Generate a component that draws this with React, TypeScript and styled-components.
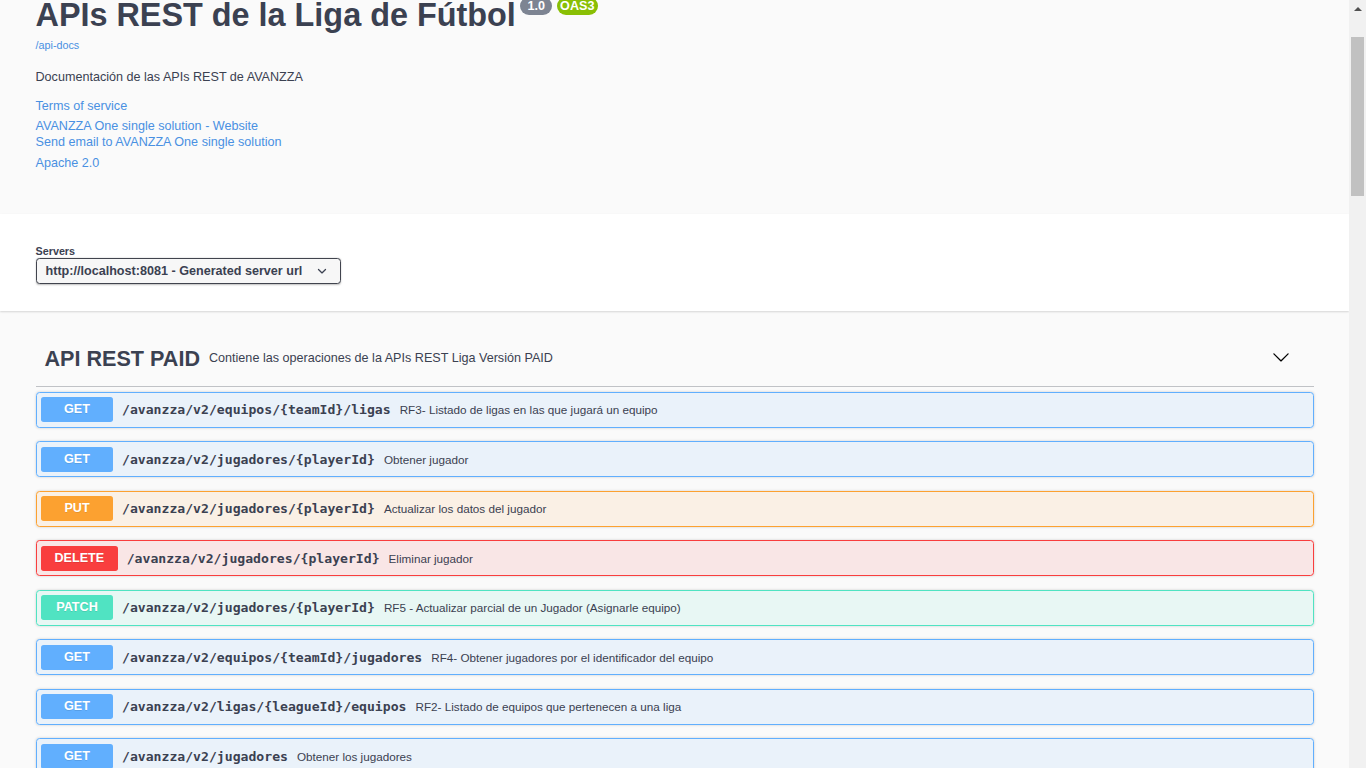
import React from 'react';
import styled, { createGlobalStyle } from 'styled-components';

const GlobalStyle = createGlobalStyle`
  html, body { margin: 0; padding: 0; height: 100%; overflow: hidden; background: #fafafa; }
  #root { height: 100%; }
  *, *::before, *::after { box-sizing: border-box; }
`;

const Page = styled.div`
  display: flex;
  height: 100vh;
  width: 100vw;
  overflow: hidden;
  background: #fafafa;
  color: #3b4151;
  font-family: "Liberation Sans", Arial, sans-serif;
`;

const Viewport = styled.div`
  flex: 1;
  min-width: 0;
  overflow: hidden;
`;

const Zoomed = styled.div`
  zoom: 0.9;
`;

const Wrapper = styled.div`
  width: 100%;
  max-width: 1460px;
  margin: 0 auto;
  padding: 0 20px;
`;

const Info = styled.div`
  padding-bottom: 48px;
`;

const Title = styled.h2`
  display: flex;
  align-items: flex-start;
  margin: -3px 0 0;
  font-size: 36px;
  line-height: 41px;
  font-weight: 700;
  color: #3b4151;
`;

const Badge = styled.small<{ $stamp?: boolean }>`
  margin-left: 5px;
  padding: 2px 4px;
  border-radius: 57px;
  background: ${(p) => (p.$stamp ? '#89bf04' : '#7d8492')};
  color: #fff;
  font-size: 14px;
  line-height: 16px;
  font-weight: 700;
  white-space: pre;
`;

const BaseUrl = styled.a`
  display: block;
  margin-top: 5px;
  font-size: 12px;
  line-height: 14px;
  color: #4990e2;
  text-decoration: none;
`;

const Description = styled.p`
  margin: 20px 0 0;
  font-size: 14px;
  line-height: 18px;
  color: #3b4151;
`;

const InfoItem = styled.div<{ $top: number }>`
  margin-top: ${(p) => p.$top}px;
`;

const InfoLink = styled.a`
  display: block;
  font-size: 14px;
  line-height: 18px;
  color: #4990e2;
  text-decoration: none;
`;

const SchemeContainer = styled.section`
  background: #fff;
  box-shadow: 0 1px 2px 0 rgba(0, 0, 0, 0.15);
  padding: 30px 0;
  margin-bottom: 20px;
`;

const ServersTitle = styled.span`
  display: block;
  padding-top: 4px;
  margin-bottom: 1px;
  font-size: 12px;
  line-height: 14px;
  font-weight: 700;
  color: #3b4151;
`;

const SelectBox = styled.div`
  display: inline-flex;
  align-items: center;
  gap: 12px;
  height: 29px;
  padding: 0 10px;
  border: 2px solid #41444e;
  border-radius: 4px;
  background: #f7f7f7;
  box-shadow: 0 1px 2px 0 rgba(0, 0, 0, 0.25);
  font-size: 14px;
  font-weight: 700;
  color: #3b4151;
`;

const Tag = styled.h3`
  display: flex;
  align-items: center;
  margin: 0 0 5px;
  padding: 18px 20px 17px 10px;
  border-bottom: 1px solid rgba(59, 65, 81, 0.3);
  font-size: 24px;
  line-height: 28px;
  font-weight: 700;
  color: #3b4151;
`;

const TagDesc = styled.small`
  flex: 2;
  padding: 0 10px;
  font-size: 14px;
  line-height: 16px;
  font-weight: 400;
`;

const ExpandButton = styled.button`
  display: flex;
  margin-top: -3px;
  padding: 1px 6px;
  border: none;
  background: none;
`;

const methodColors: Record<string, string> = {
  GET: '97,175,254',
  PUT: '252,161,48',
  DELETE: '249,62,62',
  PATCH: '80,227,194',
  POST: '73,204,144',
};

const Opblock = styled.div<{ $rgb: string }>`
  margin: 0 0 14.8px;
  border: 1px solid rgb(${(p) => p.$rgb});
  border-radius: 4px;
  background: rgba(${(p) => p.$rgb}, 0.1);
  box-shadow: 0 0 3px rgba(0, 0, 0, 0.19);
`;

const Summary = styled.div`
  display: flex;
  align-items: center;
  padding: 5px;
`;

const Method = styled.span<{ $rgb: string }>`
  min-width: 80px;
  padding: 6px 15px;
  border-radius: 3px;
  background: rgb(${(p) => p.$rgb});
  color: #fff;
  font-size: 14px;
  line-height: 16px;
  font-weight: 700;
  text-align: center;
  text-shadow: 0 1px 0 rgba(0, 0, 0, 0.1);
`;

const Path = styled.span`
  padding: 0 10px;
  font-family: "DejaVu Sans Mono", "Liberation Mono", monospace;
  font-size: 14.6px;
  font-weight: 700;
  color: #3b4151;
`;

const OpDesc = styled.span`
  flex: 1 1 auto;
  font-size: 13px;
  color: #3b4151;
`;

const ScrollBar = styled.aside`
  flex: none;
  width: 17px;
  display: flex;
  flex-direction: column;
  align-items: center;
  background: #f1f1f1;
`;

const ScrollArrow = styled.div`
  display: flex;
  align-items: center;
  justify-content: center;
  width: 17px;
  height: 17px;
  &::before {
    content: '';
    border-left: 4px solid transparent;
    border-right: 4px solid transparent;
    border-bottom: 4px solid #505050;
  }
`;

const Thumb = styled.div`
  width: 13px;
  height: 159px;
  margin-top: 20px;
  background: #c1c1c1;
`;

const ops = [
  { method: 'GET', path: '/avanzza/v2/equipos/{teamId}/ligas', desc: 'RF3- Listado de ligas en las que jugará un equipo' },
  { method: 'GET', path: '/avanzza/v2/jugadores/{playerId}', desc: 'Obtener jugador' },
  { method: 'PUT', path: '/avanzza/v2/jugadores/{playerId}', desc: 'Actualizar los datos del jugador' },
  { method: 'DELETE', path: '/avanzza/v2/jugadores/{playerId}', desc: 'Eliminar jugador' },
  { method: 'PATCH', path: '/avanzza/v2/jugadores/{playerId}', desc: 'RF5 - Actualizar parcial de un Jugador (Asignarle equipo)' },
  { method: 'GET', path: '/avanzza/v2/equipos/{teamId}/jugadores', desc: 'RF4- Obtener jugadores por el identificador del equipo' },
  { method: 'GET', path: '/avanzza/v2/ligas/{leagueId}/equipos', desc: 'RF2- Listado de equipos que pertenecen a una liga' },
  { method: 'GET', path: '/avanzza/v2/jugadores', desc: 'Obtener los jugadores' },
];

export default function App() {
  return (
    <>
      <GlobalStyle />
      <Page>
        <Viewport>
          <Zoomed>
            <Wrapper>
              <Info>
                <Title>
                  APIs REST de la Liga de Fútbol
                  <Badge>{' 1.0 '}</Badge>
                  <Badge $stamp>OAS3</Badge>
                </Title>
                <BaseUrl href="#">/api-docs</BaseUrl>
                <Description>Documentación de las APIs REST de AVANZZA</Description>
                <InfoItem $top={14}>
                  <InfoLink href="#">Terms of service</InfoLink>
                </InfoItem>
                <InfoItem $top={4}>
                  <InfoLink href="#">AVANZZA One single solution - Website</InfoLink>
                  <InfoLink href="#">Send email to AVANZZA One single solution</InfoLink>
                </InfoItem>
                <InfoItem $top={5}>
                  <InfoLink href="#">Apache 2.0</InfoLink>
                </InfoItem>
              </Info>
            </Wrapper>
            <SchemeContainer>
              <Wrapper>
                <ServersTitle>Servers</ServersTitle>
                <SelectBox>
                  http://localhost:8081 - Generated server url
                  <svg width="20" height="20" viewBox="0 0 20 20" fill="#3b4151">
                    <path d="M13.418 7.859a.695.695 0 01.978 0 .68.68 0 010 .969l-3.908 3.83a.697.697 0 01-.979 0l-3.908-3.83a.68.68 0 010-.969.695.695 0 01.978 0L10 11l3.418-3.141z" />
                  </svg>
                </SelectBox>
              </Wrapper>
            </SchemeContainer>
            <Wrapper>
              <Tag>
                <span>API REST PAID</span>
                <TagDesc>Contiene las operaciones de la APIs REST Liga Versión PAID</TagDesc>
                <ExpandButton>
                  <svg width="20" height="20" viewBox="0 0 20 20" fill="#000">
                    <path d="M17.418 6.109c.272-.268.709-.268.979 0s.271.701 0 .969l-7.908 7.83c-.27.268-.707.268-.979 0l-7.908-7.830c-.27-.268-.27-.701 0-.969.271-.268.709-.268.979 0L10 13.25l7.418-7.141z" />
                  </svg>
                </ExpandButton>
              </Tag>
              {ops.map((op, i) => (
                <Opblock key={i} $rgb={methodColors[op.method]}>
                  <Summary>
                    <Method $rgb={methodColors[op.method]}>{op.method}</Method>
                    <Path>{op.path}</Path>
                    <OpDesc>{op.desc}</OpDesc>
                  </Summary>
                </Opblock>
              ))}
            </Wrapper>
          </Zoomed>
        </Viewport>
        <ScrollBar>
          <ScrollArrow />
          <Thumb />
        </ScrollBar>
      </Page>
    </>
  );
}
